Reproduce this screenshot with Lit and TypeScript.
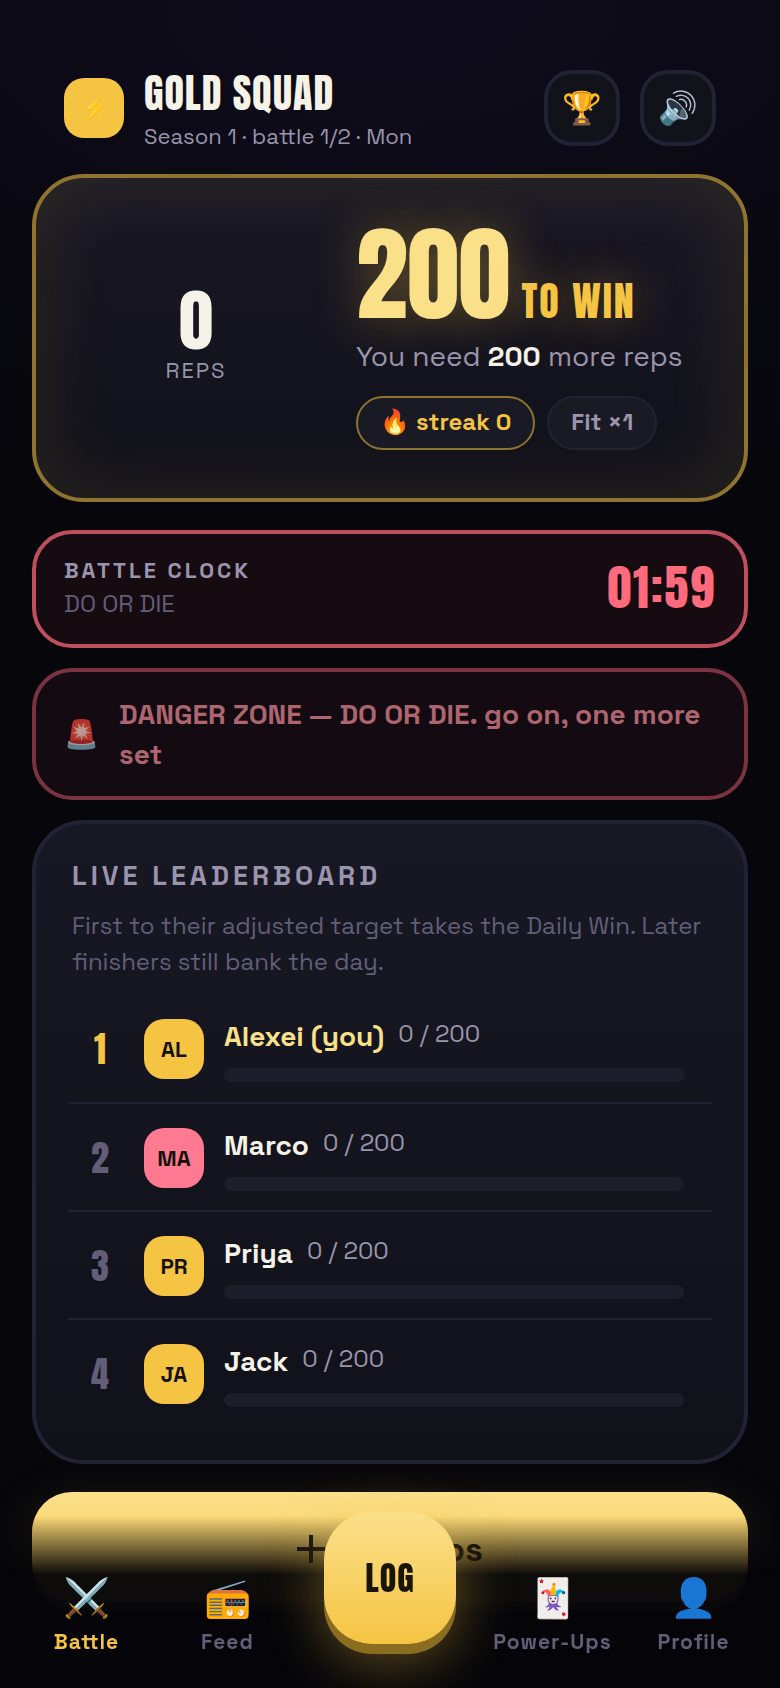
import { LitElement, html, css } from "lit";
import { customElement, state } from "lit/decorators.js";
import { classMap } from "lit/directives/class-map.js";
import { styleMap } from "lit/directives/style-map.js";

interface Player {
  name: string;
  initials: string;
  reps: number;
  target: number;
  you?: boolean;
  rival?: boolean;
}

interface Tab {
  icon: string;
  label: string;
}

@customElement("app-root")
export class AppRoot extends LitElement {
  @state() private tab = "Battle";

  private players: Player[] = [
    { name: "Alexei", initials: "AL", reps: 0, target: 200, you: true },
    { name: "Marco", initials: "MA", reps: 0, target: 200, rival: true },
    { name: "Priya", initials: "PR", reps: 0, target: 200 },
    { name: "Jack", initials: "JA", reps: 0, target: 200 },
  ];

  private leftTabs: Tab[] = [
    { icon: "⚔️", label: "Battle" },
    { icon: "📻", label: "Feed" },
  ];

  private rightTabs: Tab[] = [
    { icon: "🃏", label: "Power-Ups" },
    { icon: "👤", label: "Profile" },
  ];

  static styles = css`
    :host {
      --gold: #f5c443;
      --gold-hi: #fbe08a;
      --gold-dim: #8f7430;
      --ink: #f5f3e7;
      --muted: #9a95ac;
      --faint: #625e78;
      --line: #232235;
      --red: #ff6b7d;
      --display: "Anton", "Oswald", "Liberation Sans", sans-serif;
      display: block;
      min-height: 100vh;
      box-sizing: border-box;
      color: var(--ink);
      font-family: "Space Grotesk", "Inter", sans-serif;
      font-size: 24px;
      background: radial-gradient(120% 520px at 50% 0, #0f0d1c, #06060b) #06060b;
    }
    * {
      box-sizing: border-box;
    }
    h1,
    h2,
    p,
    ol {
      margin: 0;
      padding: 0;
    }
    button {
      font-family: inherit;
      color: inherit;
      border: 0;
      padding: 0;
      background: none;
      cursor: pointer;
    }
    main {
      padding: 66px 32px 78px;
      display: flex;
      flex-direction: column;
    }
    .head {
      display: flex;
      align-items: center;
      gap: 20px;
      padding: 0 32px;
      margin-bottom: 24px;
    }
    .avatar {
      flex: none;
      width: 60px;
      height: 60px;
      border-radius: 20px;
      background: var(--gold);
      color: #14110a;
      display: grid;
      place-items: center;
      font-size: 22px;
      font-weight: 700;
    }
    .avatar.rival {
      background: #ff7a90;
    }
    .titles {
      flex: 1;
    }
    h1 {
      font: 400 40px/54px var(--display);
      letter-spacing: 1px;
    }
    .season {
      font-size: 22px;
      line-height: 28px;
      margin-top: 2px;
      color: var(--muted);
    }
    .tool {
      width: 76px;
      height: 76px;
      border: 4px solid var(--line);
      border-radius: 28px;
      background: #12121a;
      font-size: 32px;
      line-height: 60px;
    }
    .hero {
      border: 4px solid var(--gold-dim);
      border-radius: 52px;
      padding: 40px;
      display: flex;
      gap: 40px;
      align-items: center;
      background: linear-gradient(#191824, #11111a);
      box-shadow: inset 0 0 80px rgba(245, 196, 67, 0.11);
    }
    .dial {
      width: 240px;
      height: 240px;
      display: flex;
      flex-direction: column;
      align-items: center;
      justify-content: center;
    }
    .dial b {
      font: 400 68px/64px var(--display);
    }
    .dial span {
      font-size: 22px;
      line-height: 36px;
      letter-spacing: 2px;
      color: var(--muted);
    }
    .goal {
      flex: 1;
    }
    .togo {
      font: 400 104px/96px var(--display);
      color: var(--gold-hi);
      text-shadow: 0 0 48px rgba(245, 196, 67, 0.35);
    }
    .togo small {
      font-size: 40px;
      line-height: 40px;
      letter-spacing: 2px;
      color: var(--gold);
    }
    .need {
      font-size: 28px;
      line-height: 36px;
      color: var(--muted);
      margin: 16px 0 22px;
    }
    .need b {
      color: var(--ink);
    }
    .chips {
      display: flex;
      gap: 12px;
    }
    .chip {
      height: 54px;
      padding: 0 22px;
      border: 2px solid var(--line);
      border-radius: 27px;
      background: #1a1a25;
      color: var(--muted);
      font-weight: 600;
      line-height: 48px;
    }
    .chip.hot {
      border-color: var(--gold-dim);
      color: var(--gold);
    }
    .clock {
      margin-top: 28px;
      height: 118px;
      padding: 0 28px 2px;
      border: 4px solid #bd4f5e;
      border-radius: 40px;
      background: #160b11;
      display: flex;
      align-items: center;
      justify-content: space-between;
    }
    .clock h2 {
      font-size: 22px;
      line-height: 28px;
      font-weight: 600;
      letter-spacing: 3px;
      color: var(--muted);
    }
    .clock p {
      line-height: 32px;
      margin-top: 4px;
      color: var(--faint);
    }
    .clock time {
      font: 400 48px/60px var(--display);
      letter-spacing: 2px;
      color: var(--red);
    }
    .alert {
      margin-top: 20px;
      padding: 22px 28px;
      border: 4px solid #7a3340;
      border-radius: 40px;
      background: #140a11;
      display: flex;
      align-items: center;
      gap: 20px;
      font-size: 28px;
      line-height: 40px;
      font-weight: 700;
      color: #ad6570;
    }
    .alert span {
      opacity: 0.7;
    }
    .board {
      margin-top: 20px;
      padding: 32px;
      border: 4px solid var(--line);
      border-radius: 52px;
      background: linear-gradient(#181824, #11111a);
    }
    .board h2 {
      padding: 0 4px;
      font-size: 27px;
      line-height: 40px;
      font-weight: 600;
      letter-spacing: 4px;
      color: var(--muted);
    }
    .rules {
      padding: 0 4px;
      margin: 12px 0 16px;
      line-height: 36px;
      color: var(--faint);
    }
    .rows {
      list-style: none;
    }
    .row {
      display: grid;
      grid-template-columns: 48px 60px 1fr;
      gap: 20px;
      align-items: center;
      height: 108px;
      padding: 0 28px 0 8px;
      border-bottom: 2px solid var(--line);
    }
    .row + .row {
      padding-top: 2px;
    }
    .row:last-child {
      border-bottom-color: transparent;
    }
    .rank {
      font: 400 36px/48px var(--display);
      text-align: center;
      color: var(--faint);
    }
    .line {
      display: flex;
      gap: 14px;
      line-height: 36px;
      color: var(--muted);
    }
    .line b {
      font-size: 28px;
      line-height: 40px;
      color: var(--ink);
    }
    .you .rank {
      color: var(--gold);
    }
    .you b {
      color: var(--gold-hi);
    }
    .bar {
      height: 14px;
      margin-top: 12px;
      border-radius: 7px;
      background: #1e1d2a;
      overflow: hidden;
    }
    .fill {
      height: 100%;
      background: var(--gold);
    }
    .cta {
      margin-top: 28px;
      height: 110px;
      padding-top: 4px;
      border-radius: 40px;
      display: flex;
      align-items: center;
      justify-content: center;
      gap: 16px;
      background: linear-gradient(var(--gold-hi), var(--gold));
      box-shadow: 0 8px 0 #8a6d20, 0 16px 60px rgba(245, 196, 67, 0.16);
      color: #1a1508;
      font-size: 34px;
      font-weight: 700;
    }
    .plus {
      width: 28px;
      height: 28px;
      stroke: currentColor;
      stroke-width: 4;
    }
    .nav {
      position: fixed;
      left: 0;
      right: 0;
      bottom: 0;
      padding: 56px 16px 32px;
      display: flex;
      align-items: stretch;
      background: linear-gradient(to top, rgba(5, 5, 9, 0.97) 66%, transparent);
    }
    .item {
      flex: 1;
      display: flex;
      flex-direction: column;
      align-items: center;
      gap: 4px;
      font-size: 21px;
      line-height: 28px;
      font-weight: 600;
      letter-spacing: 1px;
      white-space: nowrap;
      color: var(--faint);
    }
    .item span {
      font-size: 38px;
      line-height: 52px;
      letter-spacing: 0;
    }
    .item.on {
      color: var(--gold);
    }
    .slot {
      width: 184px;
      position: relative;
    }
    .log {
      position: absolute;
      left: 26px;
      bottom: 12px;
      width: 132px;
      height: 132px;
      border-radius: 48px;
      background: linear-gradient(var(--gold-hi), var(--gold));
      box-shadow: 0 10px 0 #8a6d20, 0 16px 60px rgba(245, 196, 67, 0.4);
      color: #1a1500;
      font: 400 34px/40px var(--display);
      letter-spacing: 1px;
    }
  `;

  private row = (p: Player, i: number) => html`
    <li class=${classMap({ row: true, you: !!p.you })}>
      <span class="rank">${i + 1}</span>
      <span class=${classMap({ avatar: true, rival: !!p.rival })}>${p.initials}</span>
      <div>
        <div class="line">
          <b>${p.name}${p.you ? " (you)" : ""}</b>
          <span>${p.reps} / ${p.target}</span>
        </div>
        <div class="bar">
          <div class="fill" style=${styleMap({ width: `${(p.reps / p.target) * 100}%` })}></div>
        </div>
      </div>
    </li>
  `;

  private item = (t: Tab) => html`
    <button
      class=${classMap({ item: true, on: this.tab === t.label })}
      @click=${() => (this.tab = t.label)}
    >
      <span>${t.icon}</span>${t.label}
    </button>
  `;

  render() {
    return html`
      <main>
        <header class="head">
          <span class="avatar">⚡</span>
          <div class="titles">
            <h1>GOLD SQUAD</h1>
            <p class="season">Season 1 · battle 1/2 · Mon</p>
          </div>
          <button class="tool" aria-label="Trophies">🏆</button>
          <button class="tool" aria-label="Sound">🔊</button>
        </header>

        <section class="hero">
          <div class="dial"><b>0</b><span>REPS</span></div>
          <div class="goal">
            <p class="togo">200<small> TO WIN</small></p>
            <p class="need">You need <b>200</b> more reps</p>
            <div class="chips">
              <span class="chip hot">🔥 streak 0</span>
              <span class="chip">Fit ×1</span>
            </div>
          </div>
        </section>

        <section class="clock">
          <div>
            <h2>BATTLE CLOCK</h2>
            <p>DO OR DIE</p>
          </div>
          <time>01:59</time>
        </section>

        <section class="alert" role="alert">
          <span>🚨</span>
          <p>DANGER ZONE — DO OR DIE. go on, one more set</p>
        </section>

        <section class="board">
          <h2>LIVE LEADERBOARD</h2>
          <p class="rules">
            First to their adjusted target takes the Daily Win. Later finishers still bank the day.
          </p>
          <ol class="rows">
            ${this.players.map(this.row)}
          </ol>
        </section>

        <button class="cta">
          <svg class="plus" viewBox="0 0 28 28" aria-hidden="true"><path d="M14 0V28M0 14H28" /></svg>
          Log reps
        </button>
      </main>

      <nav class="nav">
        ${this.leftTabs.map(this.item)}
        <div class="slot"><button class="log">LOG</button></div>
        ${this.rightTabs.map(this.item)}
      </nav>
    `;
  }
}
